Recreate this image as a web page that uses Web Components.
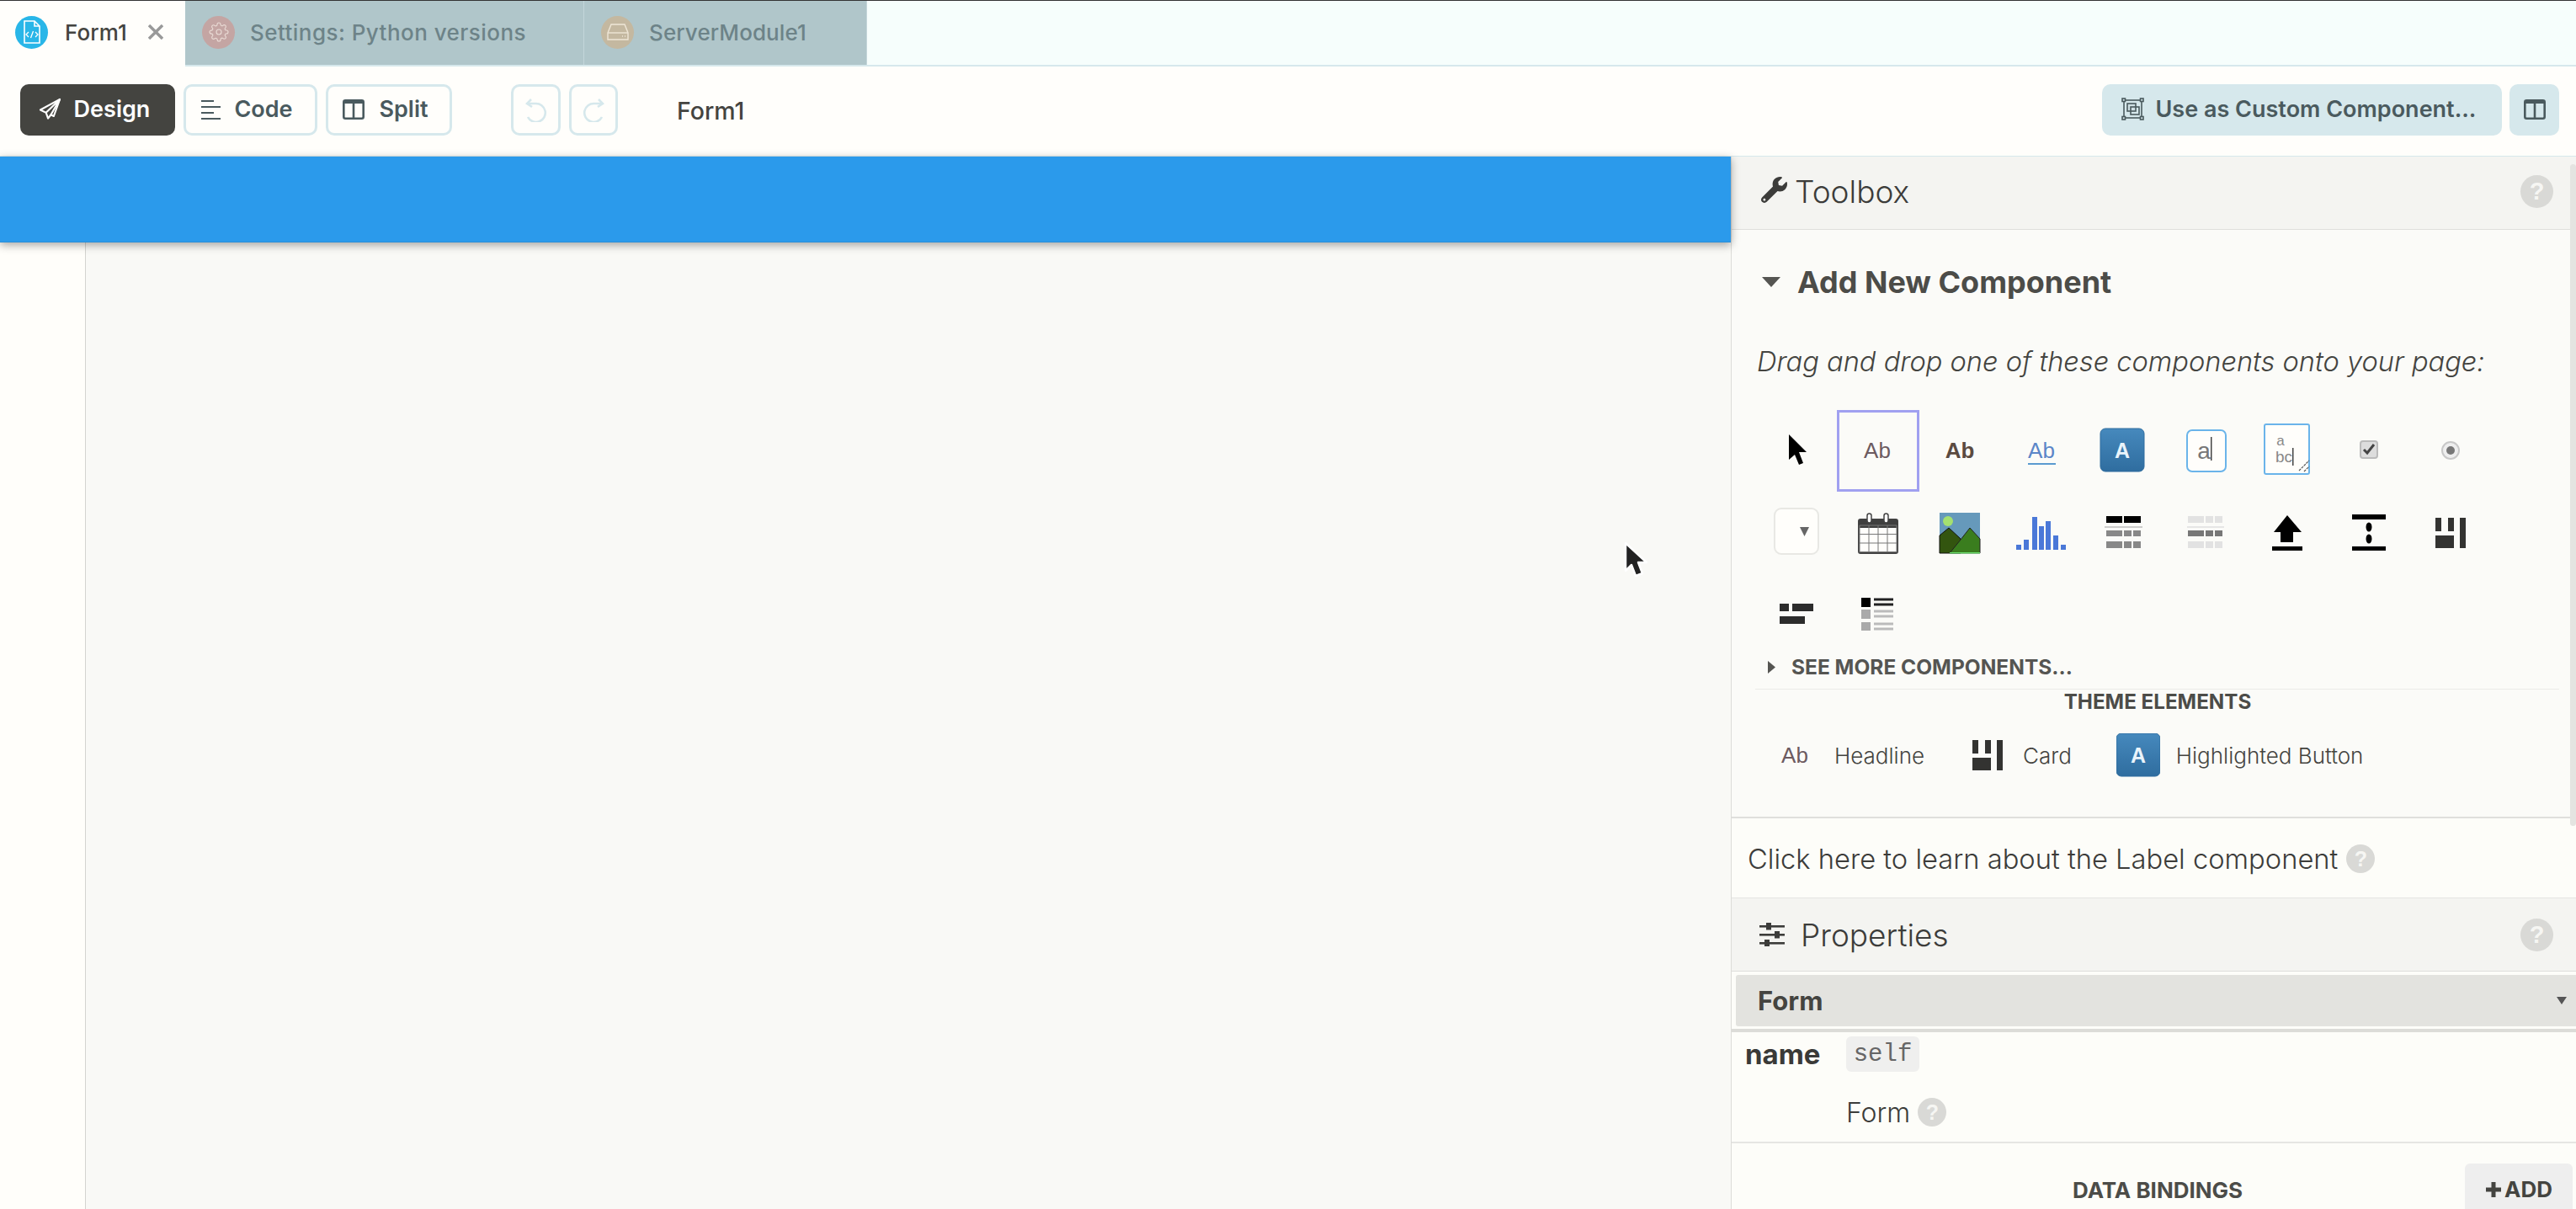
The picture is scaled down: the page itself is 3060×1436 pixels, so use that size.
<!DOCTYPE html>
<html lang="en"><head><meta charset="utf-8"><title>Form1</title>
<style>
html,body{margin:0;padding:0;width:3060px;height:1436px;overflow:hidden;background:#fffefb;font-family:Inter,"Open Sans",sans-serif;color:#444440}
#app{display:flex;flex-direction:column;height:1436px}
#main{display:flex;flex:1;min-height:0}
</style></head><body>
<div id="app">
  <app-tabs>
    <app-tab active kind="form" w="220" style="letter-spacing:.1px">Form1</app-tab>
    <app-tab kind="gear" w="474" style="letter-spacing:.45px">Settings: Python versions</app-tab>
    <app-tab kind="server" w="336" style="letter-spacing:.1px">ServerModule1</app-tab>
  </app-tabs>
  <app-toolbar></app-toolbar>
  <div id="main">
    <form-canvas></form-canvas>
    <side-panel></side-panel>
  </div>
</div>
<script>
const I={
 form:'<svg width="22" height="28" viewBox="0 0 22 28" fill="none" stroke="#fff" stroke-width="1.6"><path d="M2 1h12l6 6v20H2z"/><path d="M14 1v6h6"/><path d="M7 14l-3 3 3 3M15 14l3 3-3 3M12.5 13l-3 8" stroke-width="1.300"/></svg>',
 gear:'<svg width="24" height="24" viewBox="0 0 24 24" fill="none" stroke="#eadcd6" stroke-width="1.1"><circle cx="12" cy="12" r="3"/><path d="M19.4 15a1.65 1.65 0 0 0 .33 1.82l.06.06a2 2 0 0 1 0 2.83 2 2 0 0 1-2.83 0l-.06-.06a1.65 1.65 0 0 0-1.82-.33 1.65 1.65 0 0 0-1 1.51V21a2 2 0 0 1-2 2 2 2 0 0 1-2-2v-.09A1.65 1.65 0 0 0 9 19.4a1.65 1.65 0 0 0-1.82.33l-.06.06a2 2 0 0 1-2.83 0 2 2 0 0 1 0-2.83l.06-.06a1.65 1.65 0 0 0 .33-1.82 1.65 1.65 0 0 0-1.51-1H3a2 2 0 0 1-2-2 2 2 0 0 1 2-2h.09A1.65 1.65 0 0 0 4.6 9a1.65 1.65 0 0 0-.33-1.82l-.06-.06a2 2 0 0 1 0-2.83 2 2 0 0 1 2.83 0l.06.06a1.65 1.65 0 0 0 1.82.33H9a1.65 1.65 0 0 0 1-1.51V3a2 2 0 0 1 2-2 2 2 0 0 1 2 2v.09a1.65 1.65 0 0 0 1 1.51 1.65 1.65 0 0 0 1.82-.33l.06-.06a2 2 0 0 1 2.83 0 2 2 0 0 1 0 2.83l-.06.06a1.65 1.65 0 0 0-.33 1.82V9a1.65 1.65 0 0 0 1.51 1H21a2 2 0 0 1 2 2 2 2 0 0 1-2 2h-.09a1.65 1.65 0 0 0-1.51 1z"/></svg>',
 server:'<svg width="26" height="20" viewBox="0 0 26 20" fill="none" stroke="#eee6d6" stroke-width="1.4"><path d="M1 11l4-10h16l4 10v8H1z"/><path d="M1 11h24"/><path d="M18 15h1M21 15h1"/></svg>',
 plane:'<svg width="27" height="27" viewBox="0 0 28 28" fill="none" stroke="#fff" stroke-width="2.2" stroke-linejoin="round"><path d="M26 2L2 15l7 3.5 2.5 7 3.500-4.500 3.500 1.800z"/><path d="M26 2L9 18.5M26 2L15 21"/></svg>',
 code:'<svg width="24" height="24" viewBox="0 0 24 24" stroke="#4a5a5e" stroke-width="2.2"><path d="M0 2h15M0 9h23M0 16h15M0 23h23"/></svg>',
 split:'<svg width="26" height="24" viewBox="0 0 26 24" fill="none" stroke="#4a5a5e" stroke-width="2.6"><rect x="1.3" y="1.3" width="23.4" height="21.4" rx="2"/><path d="M13 2v20"/><path d="M1.3 3.5h23.4" stroke-width="3"/></svg>',
 undo:'<svg width="26" height="30" viewBox="0 0 26 30" fill="none" stroke="#d6e8ec" stroke-width="2.6"><path d="M7 3L2 8l6 4"/><path d="M3 8h9a11 11 0 1 1-9 16"/></svg>',
 redo:'<svg width="26" height="30" viewBox="0 0 26 30" fill="none" stroke="#d6e8ec" stroke-width="2.6"><path d="M19 3l5 5-6 4"/><path d="M23 8h-9a11 11 0 1 0 9 16"/></svg>',
 custom:'<svg width="27" height="27" viewBox="0 0 27 27" fill="none" stroke="#4a5a5e" stroke-width="1.6"><rect x="3" y="3" width="21" height="21"/><rect x="7" y="7" width="10" height="9" fill="#cfe0e4"/><rect x="11" y="11" width="10" height="9"/><g fill="#d6e8ec"><rect x="1" y="1" width="3.5" height="3.5"/><rect x="22.5" y="1" width="3.5" height="3.5"/><rect x="1" y="22.5" width="3.5" height="3.5"/><rect x="22.5" y="22.5" width="3.5" height="3.5"/></g></svg>',
 wrench:'<svg width="31" height="31" viewBox="0 0 512 512" fill="#3c3c3a"><path d="M507.73 109.1c-2.24-9.03-13.54-12.09-20.12-5.51l-74.36 74.36-67.88-11.31-11.31-67.88 74.36-74.36c6.62-6.62 3.43-17.9-5.66-20.16-47.38-11.74-99.55.91-136.58 37.93-39.64 39.64-50.55 97.1-34.05 147.2L18.74 402.76c-24.99 24.99-24.99 65.51 0 90.5 24.99 24.99 65.51 24.99 90.5 0l213.21-213.21c50.12 16.71 107.47 5.68 147.37-34.22 37.07-37.07 49.7-89.32 37.91-136.73zM64 472c-13.25 0-24-10.75-24-24 0-13.26 10.75-24 24-24s24 10.74 24 24c0 13.25-10.75 24-24 24z"/></svg>',
 sliders:'<svg width="30" height="28" viewBox="0 0 30 28" fill="#3c3c3a"><rect y="3" width="30" height="2.6"/><rect y="13" width="30" height="2.6"/><rect y="23" width="30" height="2.6"/><rect x="8" y="0" width="6" height="8.5"/><rect x="18" y="10" width="6" height="8.5"/><rect x="6" y="20" width="6" height="8"/></svg>'
};
const cell=b=>`<svg width="97" height="97" viewBox="0 0 97 97" style="display:block">${b}</svg>`;
const t=(x,y,s,txt,f,extra='')=>`<text x="${x}" y="${y}" font-family="Liberation Sans,sans-serif" font-size="${s}" fill="${f}" ${extra}>${txt}</text>`;
const AB=t(48,57,26,'Ab','#6c5a60','text-anchor="middle"');
const BTN=`<defs><linearGradient id="bg" x1="0" y1="0" x2="0" y2="1"><stop offset="0" stop-color="#4689bd"/><stop offset="1" stop-color="#2f6d9f"/></linearGradient></defs><rect x="20" y="22" width="52" height="51" rx="6" fill="url(#bg)" stroke="#2f6d9f"/>`+t(46,57,25,'A','#eaf4fb','text-anchor="middle" font-weight="bold"');
const CARD=`<g fill="#333331"><rect x="29" y="31" width="7" height="16"/><rect x="44" y="31" width="7" height="16"/><rect x="29" y="52" width="22" height="15"/><rect x="58" y="31" width="7" height="36"/></g>`;
const rowsG=(y,h,f)=>`<g fill="${f}"><rect x="27" y="${y}" width="19" height="${h}"/><rect x="48" y="${y}" width="9" height="${h}"/><rect x="59" y="${y}" width="9" height="${h}"/></g>`;
const CAL=(()=>{let g='';for(let i=0;i<5;i++){g+=`<path d="M${27+i*11} 40V72" stroke="#777"/>`}for(let j=0;j<4;j++){g+=`<path d="M27 ${40+j*10.5}H71" stroke="#777"/>`}
 return `<rect x="26" y="33" width="46" height="40" rx="2" fill="#fffefb" stroke="#444" stroke-width="2"/><rect x="26" y="33" width="46" height="10" fill="#3f3f3f"/>${g}<rect x="36" y="26" width="5" height="11" rx="2.5" fill="#fff" stroke="#444" stroke-width="1.5"/><rect x="56" y="26" width="5" height="11" rx="2.5" fill="#fff" stroke="#444" stroke-width="1.5"/>`})();
const CELLS=[
 `<path d="M40 29V59L47 53L52 65L57 63L52 50H61Z" fill="#000"/>`,
 AB,
 t(48,57,26,'Ab','#5a4a40','text-anchor="middle" font-weight="bold"'),
 t(48,57,26,'Ab','#5b86c8','text-anchor="middle"')+`<rect x="32" y="63" width="33" height="2" fill="#5b9ad0"/>`,
 BTN,
 `<rect x="26" y="24" width="46" height="49" rx="6" fill="#fffefb" stroke="#6ab4ea" stroke-width="2"/>`+t(46,58,28,'a','#777','text-anchor="middle"')+`<rect x="54" y="32" width="1.5" height="28" fill="#444"/>`,
 `<rect x="21" y="17" width="53" height="59" rx="2" fill="#fffefb" stroke="#6ab4ea" stroke-width="2"/>`+t(40,42,17,'a','#888','text-anchor="middle"')+t(44,62,19,'bc','#888','text-anchor="middle"')+`<rect x="54" y="45" width="1.5" height="21" fill="#444"/><path d="M62 72l12-12M68 73l6-6" stroke="#555" stroke-width="1.2" stroke-dasharray="3 1"/>`,
 `<rect x="37" y="37" width="20" height="20" rx="3" fill="#ddd" stroke="#bbb" stroke-width="2"/><path d="M41 47l4 4 8-10" fill="none" stroke="#444" stroke-width="3"/>`,
 `<circle cx="47" cy="48" r="10" fill="#eee" stroke="#c8c8c8" stroke-width="2"/><circle cx="47" cy="48" r="5" fill="#777"/>`,
 `<rect x="23" y="20" width="52" height="54" rx="8" fill="#fffefb" stroke="#e8e8e4" stroke-width="2"/><path d="M53 42h11l-5.500 11z" fill="#666"/>`,
 CAL,
 `<rect x="24" y="25" width="48" height="48" fill="#6699bb"/><circle cx="34" cy="35" r="6" fill="#a4e070"/><path d="M24 73V52l11-9 14 13v17z" fill="#33550f" stroke="#111" stroke-width="1"/><path d="M36 73l13-16 11-14 12 13v17z" fill="#3a7d1e" stroke="#222" stroke-width="1"/><rect x="36" y="72" width="36" height="1.500" fill="#6ce06c"/>`,
 `<g fill="#4a78d8"><rect x="18" y="63" width="6" height="6"/><rect x="27" y="57" width="6" height="12"/><rect x="37" y="30" width="6" height="39"/><rect x="45" y="41" width="6" height="28"/><rect x="53" y="35" width="6" height="34"/><rect x="62" y="52" width="6" height="17"/><rect x="71" y="63" width="6" height="6"/></g>`,
 `<rect x="27" y="29" width="19" height="8" fill="#000"/><rect x="48" y="29" width="20" height="8" fill="#000"/><rect x="25" y="41" width="45" height="2" fill="#ccc"/>`+rowsG(46,7,'#888')+rowsG(59,8,'#888'),
 rowsG(29,8,'#e2e2e2')+`<rect x="26" y="41" width="44" height="2" fill="#e6e6e6"/>`+rowsG(46,7,'#777')+rowsG(59,8,'#e2e2e2'),
 `<path d="M48 28L65 48H55V60H40V48H32Z" fill="#000"/><rect x="30" y="65" width="36" height="5" fill="#000"/>`,
 `<rect x="27" y="27" width="40" height="6" fill="#000"/><rect x="27" y="65" width="40" height="5" fill="#000"/><ellipse cx="47" cy="42" rx="3.500" ry="5.500"/><ellipse cx="47" cy="56" rx="3.500" ry="5.500"/>`,
 CARD,
 `<g fill="#2c2c2c"><rect x="29" y="36" width="11" height="9"/><rect x="44" y="36" width="25" height="9"/><rect x="29" y="51" width="30" height="9"/></g>`,
 `<rect x="29" y="29" width="11" height="11" fill="#000"/><path d="M44 31h23M44 37h23" stroke="#222" stroke-width="3"/><rect x="29" y="43" width="11" height="11" fill="#aaa"/><path d="M44 45h23M44 51h23" stroke="#bbb" stroke-width="3"/><rect x="29" y="58" width="11" height="10" fill="#aaa"/><path d="M44 60h23M44 66h23" stroke="#bbb" stroke-width="3"/>`
];
function def(name,css,html){
 customElements.define(name,class extends HTMLElement{
  constructor(){super();const r=this.attachShadow({mode:'open'});r.innerHTML=`<style>${css}</style>${html}`}
 });
}
def('app-tabs',`:host{display:flex;height:76px;border-top:1px solid #333;border-bottom:2px solid #d6e8ec;background:#f6fefc;box-sizing:content-box;flex:none}`,'<slot></slot>');
const tabBg={form:'#29b6e8',gear:'#c4a5a3',server:'#c4b8a0'};
customElements.define('app-tab',class extends HTMLElement{
 constructor(){super();this.attachShadow({mode:'open'})}
 connectedCallback(){
  const k=this.getAttribute('kind'),a=this.hasAttribute('active');
  this.shadowRoot.innerHTML=`<style>
  :host{display:flex;align-items:center;box-sizing:border-box;width:${this.getAttribute('w')}px;height:${a?78:76}px;padding-left:${a?18:20}px;background:${a?'#fffefb':'#b0c6ca'};border-right:1px solid ${a?'transparent':'#c4d6da'};font-size:26px;font-weight:500;color:${a?'#444440':'#6d8388'};padding-bottom:${a?4:0}px;flex:none}
  .d{width:39px;height:39px;border-radius:50%;display:flex;align-items:center;justify-content:center;background:${tabBg[k]};margin-right:${a?20:18}px;flex:none;margin-top:${a?0:-2}px}
  .l{margin-top:${a?0:-2}px;white-space:nowrap}
  .x{margin-left:25px;width:18px;height:18px}
  </style><span class="d">${I[k]}</span><span class="l"><slot></slot></span>${a?'<svg class="x" viewBox="0 0 18 18" stroke="#999" stroke-width="3.4"><path d="M1 1l16 16M17 1L1 17"/></svg>':''}`;
 }
});
customElements.define('tool-btn',class extends HTMLElement{
 constructor(){super();this.attachShadow({mode:'open'})}
 connectedCallback(){
  const v=this.getAttribute('v')||'line',w=this.getAttribute('w'),ic=this.getAttribute('icon'),g=this.getAttribute('gap')||15;
  const st={dark:'background:#444440;color:#fff;border:0',line:'background:#fffefb;color:#4a5a5e;border:3px solid #d6e8ec',fill:'background:#d6e8ec;color:#4a5a5e;border:0'}[v];
  const pr=this.textContent.trim()?8:0;
  this.shadowRoot.innerHTML=`<style>:host{display:flex;align-items:center;justify-content:center;gap:${g}px;box-sizing:border-box;width:${w}px;height:61px;border-radius:10px;${st};font-size:27px;font-weight:600;flex:none;white-space:nowrap;padding:0 ${pr}px 2px 0}</style>${I[ic]}<slot></slot>`;
 }
});
def('app-toolbar',`:host{display:flex;align-items:center;height:107px;padding:0 20px 3px 24px;box-sizing:border-box;background:#fffefb;border-bottom:1px solid #d6e8ec;flex:none}
 .sp{flex:1}.f{font-size:28.5px;font-weight:500;margin-left:70px;color:#444440;margin-top:2px}`,
 `<tool-btn v="dark" icon="plane" w="184">Design</tool-btn>
  <tool-btn icon="code" w="159" style="margin-left:10px">Code</tool-btn>
  <tool-btn icon="split" w="150" gap="17" style="margin-left:10px">Split</tool-btn>
  <tool-btn icon="undo" w="59" style="margin-left:70px"></tool-btn>
  <tool-btn icon="redo" w="58" style="margin-left:10px"></tool-btn>
  <span class="f">Form1</span><span class="sp"></span>
  <tool-btn v="fill" icon="custom" w="475" gap="14">Use as Custom Component...</tool-btn>
  <tool-btn v="fill" icon="split" w="59" style="margin-left:9px"></tool-btn>`);
def('form-canvas',`:host{display:block;flex:1;position:relative;background:#f9f9f6;min-width:0}
 .bar{height:102px;background:#2b9aeb;box-shadow:0 3px 10px rgba(0,0,0,.35);position:relative;z-index:1;border-bottom:1px solid #2a8fd8;box-sizing:border-box}
 .g{position:absolute;left:0;top:0;bottom:0;width:101px;background:#fffefa;border-right:1px solid #d4d4d0;box-sizing:content-box}
 .c{position:absolute;left:1925px;top:454px;z-index:2}`,
 `<div class="g"></div><div class="bar"></div>
  <svg class="c" width="36" height="48" viewBox="0 0 36 48"><path d="M6 5V38L13 31L18 44L26 41L21 28H31Z" fill="#222" stroke="#fff" stroke-width="2.500" stroke-linejoin="round"/></svg>`);
def('panel-head',`:host{display:flex;align-items:center;height:86px;background:#f4f4f1;border-bottom:1px solid #dfdfdc;box-sizing:content-box;flex:none;font-size:37px;font-weight:300;color:#3c3c3a;padding-left:var(--pl,35px)}
 .i{display:flex;margin-right:var(--ig,9px)} .l{margin-top:var(--lt,0)} .s{flex:1} help-dot{margin-right:27px;--d:39px;--f:29px;margin-top:var(--lt,0)}`,
 `<span class="i" style="margin-top:var(--lt,0)"><slot name="icon"></slot></span><span class="l"><slot></slot></span><span class="s"></span><help-dot></help-dot>`);
def('help-dot',`:host{display:inline-flex;align-items:center;justify-content:center;width:var(--d,34px);height:var(--d,34px);border-radius:50%;background:#d9d9d6;color:#f6f6f3;font:700 var(--f,25px) "Liberation Sans",sans-serif;flex:none}`,'?');
def('pal-cell',`:host{display:block;width:97.4px;height:97px}`,'<slot></slot>');
def('comp-palette',`:host{display:grid;grid-template-columns:repeat(9,97.4px);grid-auto-rows:97px;margin-top:36px;margin-left:28px}
 .sel{box-shadow:inset 0 0 0 3px #a0a0f0}`,
 CELLS.map((c,i)=>`<pal-cell class="${i==1?'sel':''}">${cell(c)}</pal-cell>`).join(''));
def('theme-item',`:host{display:flex;align-items:center;height:52px;font-size:26px;font-weight:300;color:#444440;white-space:nowrap;flex:none}`,'<slot></slot>');
def('side-panel',`:host{display:flex;flex-direction:column;width:1004px;flex:none;border-left:1px solid #dcdcd8;box-sizing:border-box;background:#fdfdf9;position:relative;overflow:hidden}
 .add{background:#fbfbf8;padding:40px 0 49px;border-bottom:2px solid #dfdfdc;height:699px;box-sizing:border-box;flex:none}
 h3{margin:0 0 0 35px;font-size:36px;font-weight:700;line-height:44px;color:#4c4c48;display:flex;align-items:center;gap:19px;white-space:nowrap}
 h3 svg{flex:none}
 .drag{margin:50px 0 0 30px;font-size:32.6px;font-weight:300;font-style:italic;line-height:44px;color:#444440;white-space:nowrap}
 .more{margin-left:43px;height:28px;display:flex;align-items:center;gap:19px;font-size:24.500px;font-weight:700;color:#555552;white-space:nowrap}
 .hr{height:1px;background:#ebebe8;margin:12px 20px 0 28px}
 .te{text-align:center;font-size:24.200px;font-weight:700;line-height:26px;color:#4c4c48;margin-left:9px;padding-top:2px}
 .tr{display:flex;align-items:center;margin-top:24px;height:52px}
 .tr svg{flex:none;display:block}
 .learn{display:flex;align-items:center;height:95px;padding:2px 0 0 19px;border-bottom:1px solid #e6e6e3;gap:10px;font-size:32.7px;font-weight:300;color:#3c3c3a;white-space:nowrap;flex:none;box-sizing:border-box}
 .sb{position:absolute;right:0;top:9px;height:786px;width:7px;background:#e4e4e1;border-radius:4px}
 .fb{height:61px;margin:4px 0 3px 5px;background:#e3e3df;border-radius:3px 0 0 3px;display:flex;align-items:center;padding-left:26px;font-size:31px;font-weight:700;color:#444440;flex:none;position:relative;box-sizing:border-box}
 .fb svg{position:absolute;right:11px;top:26px}
 .thick{height:4px;background:#dcdcd8;flex:none}
 .nr{display:flex;align-items:center;height:42px;margin-top:5px;font-size:33px;font-weight:700;color:#3a3a38;flex:none}
 .nr b{width:120px;margin-left:16px;font-weight:700}
 code{display:flex;align-items:center;height:42px;width:87px;justify-content:center;background:#efefee;border-radius:6px;font:29px "Liberation Mono",monospace;color:#666;font-weight:400}
 .fr{display:flex;align-items:center;height:44px;margin-top:26px;padding-left:136px;font-size:32px;font-weight:300;gap:9px;color:#3c3c3a;flex:none}
 .bd{border-top:2px solid #e6e6e3;margin-top:13px;flex:none;position:relative;height:100px}
 .db{position:absolute;left:405px;top:43px;font-size:26px;font-weight:700;color:#4c4c48;white-space:nowrap;line-height:26px}
 .addb{position:absolute;left:871px;top:24px;width:128px;height:70px;background:#eee;border-radius:6px 6px 0 0;display:flex;justify-content:center;padding-top:17px;box-sizing:border-box;font-size:26px;font-weight:700;color:#444440;gap:3px;line-height:28px}`,
 `<panel-head style="--lt:-3px"><span slot="icon">${I.wrench}</span>Toolbox</panel-head>
  <div class="add">
   <h3><svg width="24" height="14" viewBox="0 0 24 14"><path d="M1 1h22L12 13z" fill="#555552"/></svg>Add New Component</h3>
   <div class="drag">Drag and drop one of these components onto your page:</div>
   <comp-palette></comp-palette>
   <div class="more"><svg width="9" height="15" viewBox="0 0 9 15"><path d="M0 0l9 7.500-9 7.500z" fill="#555552"/></svg>SEE MORE COMPONENTS...</div>
   <div class="hr"></div>
   <div class="te">THEME ELEMENTS</div>
   <div class="tr">
    <svg width="52" height="52" viewBox="22 22 52 52" style="margin-left:49px">${AB}</svg>
    <theme-item style="margin-left:21px">Headline</theme-item>
    <svg width="52" height="52" viewBox="21 23 52 52" style="margin-left:49px">${CARD}</svg>
    <theme-item style="margin-left:16px">Card</theme-item>
    <svg width="52" height="52" viewBox="20 22 52 52" style="margin-left:53px">${BTN.replace(/bg/g,'bg2')}</svg>
    <theme-item style="margin-left:19px">Highlighted Button</theme-item>
   </div>
  </div>
  <div class="learn">Click here to learn about the Label component<help-dot></help-dot></div>
  <panel-head style="--ig:19px;--pl:33px"><span slot="icon">${I.sliders}</span>Properties</panel-head>
  <div class="fb">Form<svg width="12" height="9" viewBox="0 0 12 9"><path d="M0 0h12L6 9z" fill="#555"/></svg></div>
  <div class="thick"></div>
  <div class="nr"><b>name</b><code>self</code></div>
  <div class="fr">Form<help-dot></help-dot></div>
  <div class="bd"><span class="db">DATA BINDINGS</span><span class="addb"><svg width="20" height="28" viewBox="0 0 20 28"><path d="M10 5v18M1 14h18" stroke="#444440" stroke-width="5"/></svg>ADD</span></div>
  <div class="sb"></div>`);
</script>
</body></html>
